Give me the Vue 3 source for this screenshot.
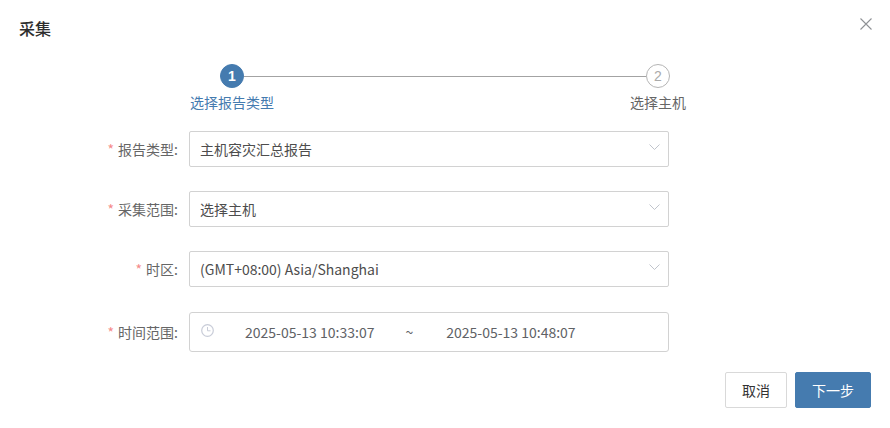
<script setup>
const rows = [
  { label: '报告类型', value: '主机容灾汇总报告' },
  { label: '采集范围', value: '选择主机' },
  { label: '时区', value: '(GMT+08:00) Asia/Shanghai' }
]
</script>

<template>
  <div class="dialog">
    <header class="head">
      <h1 class="title">采集</h1>
      <svg class="close" width="12" height="12" viewBox="0 0 12 12"><path d="M.5.5l11 11M11.500.5l-11 11" stroke="#8f9296" stroke-width="1.100" fill="none" /></svg>
    </header>

    <div class="steps">
      <div class="track">
        <span class="dot on">1</span>
        <span class="line"></span>
        <span class="dot">2</span>
      </div>
      <div class="labels">
        <span class="step-label first">选择报告类型</span>
        <span class="step-label second">选择主机</span>
      </div>
    </div>

    <form class="form">
      <div v-for="r in rows" :key="r.label" class="row">
        <label class="label"><i>*</i>{{ r.label }}:</label>
        <div class="control">
          <span>{{ r.value }}</span>
          <svg class="chev" width="11" height="7" viewBox="0 0 11 7"><path d="M.5.5l5 5 5-5" stroke="#c0c4cc" fill="none" /></svg>
        </div>
      </div>
      <div class="row last">
        <label class="label"><i>*</i>时间范围:</label>
        <div class="control range">
          <svg class="clock" width="13" height="13" viewBox="0 0 13 13"><circle cx="6.500" cy="6.500" r="5.800" stroke="#c8ccd8" stroke-width="1.200" fill="none" /><path d="M6.500 3v3.800h3" stroke="#c8ccd8" fill="none" /></svg>
          <span class="time t1">2025-05-13 10:33:07</span>
          <span class="tilde">~</span>
          <span class="time t2">2025-05-13 10:48:07</span>
        </div>
      </div>
    </form>

    <footer class="foot">
      <button type="button" class="btn">取消</button>
      <button type="button" class="btn primary">下一步</button>
    </footer>
  </div>
</template>

<style>
html, body { margin: 0; background: #fff; }
</style>

<style scoped>
.dialog {
  width: 890px;
  height: 428px;
  box-sizing: border-box;
  overflow: hidden;
  background: #fff;
  font-family: "Noto Sans CJK SC", "Noto Sans", sans-serif;
  font-size: 14px;
  color: #555;
}
.head {
  height: 64px;
  padding: 16px 18px 0 19px;
  box-sizing: border-box;
  display: flex;
  justify-content: space-between;
  align-items: flex-start;
}
.title {
  margin: 0;
  font-size: 16px;
  font-weight: 500;
  line-height: 24px;
  color: #2e2e2e;
}
.close { margin-top: 2px; }
.steps { width: 450px; margin-left: 220px; }
.track { display: flex; align-items: center; width: 450px; }
.dot {
  width: 24px;
  height: 24px;
  box-sizing: border-box;
  border-radius: 50%;
  border: 1px solid #b5b5b5;
  color: #aaa;
  display: flex;
  align-items: center;
  justify-content: center;
  font-family: "Liberation Sans", sans-serif;
  font-size: 14px;
  flex: none;
}
.dot.on { background: #457baf; border-color: #457baf; color: #fff; font-weight: 700; }
.line { flex: 1; height: 1px; background: #a3a3a3; }
.labels { display: flex; justify-content: space-between; margin-top: 3px; margin-left: -30px; width: 496px; }
.step-label { line-height: 22px; font-size: 14px; }
.first { color: #457baf; }
.second { color: #666; }
.form { margin-top: 18px; }
.row { display: flex; align-items: center; height: 36px; margin-bottom: 24px; }
.row.last { height: 40px; margin-top: 25px; margin-bottom: 20px; }
.label { width: 178px; text-align: right; margin-right: 11px; flex: none; color: #666; }
.label i { font-style: normal; color: #f58a8a; margin-right: 4px; font-size: 14px; }
.control {
  width: 480px;
  height: 100%;
  box-sizing: border-box;
  border: 1px solid #d2d2d2;
  border-radius: 2px;
  padding: 0 8px 0 10px;
  display: flex;
  align-items: center;
  justify-content: space-between;
  color: #4d4d4d;
}
.chev { margin-top: -3px; }
.range {
  justify-content: flex-start;
  border-radius: 3px;
  padding-left: 11px;
  color: #606266;
}
.clock { margin-top: -4px; flex: none; }
.time { white-space: nowrap; }
.t1 { margin-left: 31px; }
.tilde { margin-left: 31px; }
.t2 { margin-left: 33px; }
.foot { display: flex; justify-content: flex-end; gap: 8px; padding-right: 19px; }
.btn {
  height: 36px;
  width: 62px;
  box-sizing: border-box;
  border: 1px solid #d9d9d9;
  border-radius: 2px;
  background: #fff;
  color: #333;
  font: inherit;
  padding: 0;
}
.btn.primary { width: 76px; background: #457baf; border-color: #457baf; color: #fff; }
</style>
